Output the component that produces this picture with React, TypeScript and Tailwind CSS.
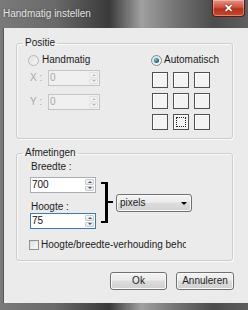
import React from "react";

function Radio({ checked, disabled }: { checked?: boolean; disabled?: boolean }) {
  return (
    <div
      className={`flex h-[11px] w-[11px] shrink-0 items-center justify-center rounded-full border ${
        disabled ? "border-[#b8b8b8] bg-[linear-gradient(135deg,#e2e2e2,#f6f6f6)]" : "border-[#8a8a8a] bg-[linear-gradient(135deg,#d9d9d9,#ffffff)]"
      }`}
    >
      {checked && (
        <div className="h-[5px] w-[5px] rounded-full bg-[radial-gradient(circle_at_35%_35%,#6fc3de,#1b5a78_70%)]" />
      )}
    </div>
  );
}

function Spinner({ disabled }: { disabled?: boolean }) {
  const tri = disabled ? "border-[#bdbdbd]" : "border-[#555]";
  return (
    <div className="flex w-[11px] shrink-0 flex-col gap-[1px] p-[1px]">
      <div className={`flex flex-1 items-center justify-center rounded-[1px] border ${disabled ? "border-[#e0e0e0] bg-[#f2f2f2]" : "border-[#c7ccd3] bg-[linear-gradient(#f6f7f9,#e3e6ea)]"}`}>
        <div className={`h-0 w-0 border-x-[2px] border-b-[2px] border-x-transparent ${tri}`} />
      </div>
      <div className={`flex flex-1 items-center justify-center rounded-[1px] border ${disabled ? "border-[#e0e0e0] bg-[#f2f2f2]" : "border-[#c7ccd3] bg-[linear-gradient(#f6f7f9,#e3e6ea)]"}`}>
        <div className={`h-0 w-0 border-x-[2px] border-t-[2px] border-x-transparent ${tri}`} />
      </div>
    </div>
  );
}

function NumInput({ value, disabled, focused, className }: { value: string; disabled?: boolean; focused?: boolean; className: string }) {
  return (
    <div
      className={`flex h-[16px] ${className} border ${
        disabled
          ? "border-[#c4c4c4] bg-[#f0f0f0] text-[#a6a6a6]"
          : focused
          ? "border-[#3d7bad] bg-white text-[#111]"
          : "border-[#abadb3] bg-white text-[#111]"
      }`}
    >
      <div className="flex-1 pl-[1px] leading-[14px]">{value}</div>
      <Spinner disabled={disabled} />
    </div>
  );
}

function Cell({ focus }: { focus?: boolean }) {
  return (
    <div className="flex h-[16px] w-[16px] items-center justify-center border border-[#505050] bg-[#f3f3f3] shadow-[inset_1px_1px_0_#ffffff]">
      {focus && <div className="h-[10px] w-[10px] border border-dotted border-[#222]" />}
    </div>
  );
}

export default function App() {
  return (
    <div className="flex h-[310px] w-[248px] flex-col overflow-hidden bg-[linear-gradient(90deg,#7a7a7a_0%,#6a6a6a_22%,#3a3a3a_44%,#a0a0a0_57%,#767676_70%,#4c4c4c_86%,#5e5e5e_100%)] font-['Liberation_Sans',Arial,sans-serif] text-[10px] leading-[12px] text-[#1b1b1b]">
      {/* Title bar */}
      <div className="relative h-[28px] shrink-0">
        <div className="pl-[3px] pt-[8px] text-[#e4e4e4] [text-shadow:0_0_3px_rgba(0,0,0,0.4)]">Handmatig instellen</div>
        <div className="absolute right-[3px] top-0 flex h-[17px] w-[33px] items-center justify-center rounded-b-[4px] border border-t-0 border-[#5a1a12] bg-[linear-gradient(#e39486,#d0533f_45%,#b8321d_55%,#c4492e)] shadow-[inset_0_0_0_1px_rgba(255,255,255,0.35)]">
          <span className="text-[11px] font-bold leading-[11px] text-white [text-shadow:0_0_2px_#5a1a12]">✕</span>
        </div>
      </div>

      {/* Client area */}
      <div className="mb-[7px] ml-[4px] flex flex-1 flex-col bg-[#ebebeb] pl-[12px] pt-[8px] shadow-[-1px_0_0_#555]">
        {/* Positie */}
        <fieldset className="w-[217px] rounded-[3px] border border-[#cdcdcd] pb-[8px] shadow-[inset_1px_1px_0_#fafafa,1px_1px_0_#fafafa]">
          <legend className="ml-[6px] px-[2px] leading-[14px]">Positie</legend>
          <div className="flex">
            <div className="flex w-[134px] flex-col pl-[11px]">
              <div className="mt-[3px] flex h-[14px] items-center gap-[3px]">
                <Radio disabled />
                <span>Handmatig</span>
              </div>
              <div className="mt-[3px] flex items-center">
                <span className="w-[20px] pl-[2px] text-[#a8a8a8]">X :</span>
                <NumInput value="0" disabled className="w-[52px]" />
              </div>
              <div className="mt-[8px] flex items-center">
                <span className="w-[20px] pl-[2px] text-[#a8a8a8]">Y :</span>
                <NumInput value="0" disabled className="w-[52px]" />
              </div>
            </div>
            <div className="flex flex-col">
              <div className="mt-[3px] flex h-[14px] items-center gap-[2px]">
                <Radio checked />
                <span>Automatisch</span>
              </div>
              <div className="ml-[1px] mt-[5px] grid grid-cols-[16px_16px_16px] gap-[5px]">
                <Cell />
                <Cell />
                <Cell />
                <Cell />
                <Cell />
                <Cell />
                <Cell />
                <Cell focus />
                <Cell />
              </div>
            </div>
          </div>
        </fieldset>

        {/* Afmetingen */}
        <fieldset className="mt-[7px] w-[217px] rounded-[3px] border border-[#cdcdcd] pb-[8px] shadow-[inset_1px_1px_0_#fafafa,1px_1px_0_#fafafa]">
          <legend className="ml-[6px] px-[2px] leading-[14px]">Afmetingen</legend>
          <div className="flex items-start pl-[13px]">
            <div className="flex flex-col">
              <span className="ml-[1px] mt-[1px]">Breedte :</span>
              <NumInput value="700" className="mt-[4px] w-[66px]" />
              <span className="ml-[1px] mt-[8px]">Hoogte :</span>
              <NumInput value="75" focused className="w-[66px]" />
            </div>
            <div className="ml-[5px] mt-[22px] h-[41px] w-[7px] border-y-2 border-r-[3px] border-black" />
            <div className="mt-[41px] h-[2px] w-[5px] bg-black" />
            <div className="ml-[3px] mt-[34px] flex h-[18px] w-[76px] items-center justify-between rounded-[3px] border border-[#707070] bg-[linear-gradient(#f4f4f4,#ebebeb_45%,#dddddd_50%,#d0d0d0)] pl-[3px] pr-[4px] shadow-[inset_0_0_0_1px_#fbfbfb]">
              <span>pixels</span>
              <div className="h-0 w-0 border-x-[3px] border-t-[3px] border-x-transparent border-t-black" />
            </div>
          </div>
          <div className="ml-[12px] mt-[9px] flex h-[14px] w-[157px] items-center gap-[2px] overflow-hidden whitespace-nowrap">
            <div className="h-[10px] w-[10px] shrink-0 border border-[#8f8f8f] bg-[linear-gradient(135deg,#dedede,#fbfbfb)]" />
            <span>Hoogte/breedte-verhouding behouden</span>
          </div>
        </fieldset>

        {/* Buttons */}
        <div className="mt-[11px] flex w-[218px] justify-end gap-[9px]">
          <div className="flex h-[18px] w-[57px] items-center justify-center rounded-[3px] border border-[#707070] bg-[linear-gradient(#f2f2f2,#ebebeb_45%,#dddddd_50%,#cfcfcf)] shadow-[inset_0_0_0_1px_#fafafa]">
            Ok
          </div>
          <div className="flex h-[18px] w-[58px] items-center justify-center rounded-[3px] border border-[#707070] bg-[linear-gradient(#f2f2f2,#ebebeb_45%,#dddddd_50%,#cfcfcf)] shadow-[inset_0_0_0_1px_#fafafa]">
            Annuleren
          </div>
        </div>
      </div>
    </div>
  );
}
